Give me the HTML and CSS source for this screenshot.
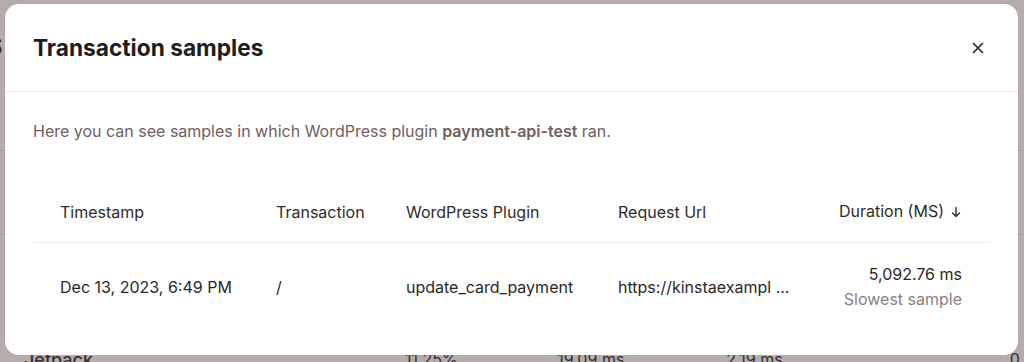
FILE: index.html
```html
<!DOCTYPE html>
<html>
<head>
  <title>Transaction samples</title>
  <link rel="stylesheet" href="styles.css">
</head>
<body>
  <!-- page behind the dialog -->
  <div class="page">
    <div class="page-title">S</div>
    <div class="page-row"></div>
    <div class="page-row"></div>
    <div class="page-row plain"></div>
    <div class="page-row last">
      <span class="p-name">Jetpack</span>
      <span class="p-pct">11.25%</span>
      <span class="p-avg">19.09 ms</span>
      <span class="p-min">2.19 ms</span>
      <span class="p-end">0.</span>
    </div>
  </div>

  <div class="overlay"></div>

  <div class="modal">
    <div class="modal-header">
      <h2 class="modal-title">Transaction samples</h2>
      <button class="close-btn" aria-label="Close">
        <svg viewBox="0 0 12 12" width="12" height="12" fill="none" stroke="currentColor">
          <path d="M1.5 1.5l9 9M10.5 1.5l-9 9" stroke-width="1.7" stroke-linecap="round"/>
        </svg>
      </button>
    </div>

    <div class="modal-body">
      <p class="intro">Here you can see samples in which WordPress plugin <strong>payment-api-test</strong> ran.</p>

      <div class="samples">
        <div class="samples-row head">
          <div class="cell">Timestamp</div>
          <div class="cell">Transaction</div>
          <div class="cell">WordPress Plugin</div>
          <div class="cell">Request Url</div>
          <div class="cell right">
            Duration (MS)
            <svg class="sort-icon" viewBox="0 0 12 12" width="12" height="12" fill="none" stroke="currentColor">
              <path d="M6 1.5v9M2.5 7l3.5 3.5L9.5 7" stroke-width="1.4" stroke-linecap="round" stroke-linejoin="round"/>
            </svg>
          </div>
        </div>
        <div class="samples-row">
          <div class="cell">Dec 13, 2023, 6:49 PM</div>
          <div class="cell">/</div>
          <div class="cell">update_card_payment</div>
          <div class="cell">https://kinstaexampl ...</div>
          <div class="cell right">
            <div>5,092.76 ms</div>
            <div class="muted">Slowest sample</div>
          </div>
        </div>
      </div>
    </div>
  </div>
</body>
</html>
```

FILE: styles.css
```css
:root {
  --font: Inter, "Noto Sans", sans-serif;
  --text: #2b2727;
  --text-soft: #6e6060;
  --text-muted: #8c7f7f;
  --border: #f0eae8;
}

* {
  box-sizing: border-box;
}

body {
  margin: 0;
  width: 1024px;
  height: 362px;
  overflow: hidden;
  font-family: var(--font);
  color: var(--text);
  background: #ffffff;
  position: relative;
}

/* background page */
.page {
  height: 362px;
  overflow: hidden;
}

.page-title {
  font-size: 24px;
  font-weight: 600;
  height: 67px;
  padding-top: 32px;
  margin-left: -13px;
  color: #222;
}

.page-row {
  height: 84px;
  border-bottom: 1px solid #e5e0df;
}

.page-row.plain {
  border-bottom: none;
  height: 114px;
}

.page-row.last {
  border-bottom: none;
  display: flex;
  align-items: flex-start;
  font-size: 16px;
  color: #222;
}

.p-name { margin-left: 24px; width: 383px; font-size: 18px; font-weight: 500; }
.p-pct { width: 153px; }
.p-avg { width: 170px; }
.p-min { width: 285px; }

.overlay {
  position: absolute;
  inset: 0;
  background: rgba(85, 63, 60, 0.43);
}

/* dialog */
.modal {
  position: absolute;
  left: 5px;
  top: 4px;
  width: 1013px;
  height: 351px;
  background: #ffffff;
  border-radius: 14px;
}

.modal-header {
  display: flex;
  align-items: center;
  justify-content: space-between;
  height: 88px;
  padding: 0 28px 0 28px;
  border-bottom: 1px solid var(--border);
}

.modal-title {
  margin: 0;
  font-size: 22.7px;
  font-weight: 700;
  color: #1f1c1c;
}

.close-btn {
  border: none;
  background: none;
  padding: 0;
  width: 24px;
  height: 24px;
  display: flex;
  align-items: center;
  justify-content: center;
  color: #2a2626;
  cursor: pointer;
}

.modal-body {
  padding: 27px 28px 0 28px;
}

.intro {
  margin: 0;
  font-size: 16px;
  line-height: 24px;
  color: var(--text-soft);
}

.intro strong {
  font-weight: 600;
}

.samples {
  margin-top: 38px;
}

.samples-row {
  display: grid;
  grid-template-columns: 216px 130px 212px 1fr auto;
  align-items: center;
  padding: 0 28px 0 27px;
  font-size: 16px;
  color: var(--text);
}

.samples-row.head {
  height: 62px;
  border-bottom: 1px solid var(--border);
  color: #2f2b2b;
}

.samples-row:not(.head) {
  height: 88px;
}

.cell.right {
  text-align: right;
  display: flex;
  flex-direction: column;
  align-items: flex-end;
  line-height: 25px;
}

.head .cell.right {
  flex-direction: row;
  align-items: center;
  justify-content: flex-end;
  gap: 6px;
}

.sort-icon {
  color: #2f2b2b;
}

.muted {
  color: var(--text-muted);
}
```
